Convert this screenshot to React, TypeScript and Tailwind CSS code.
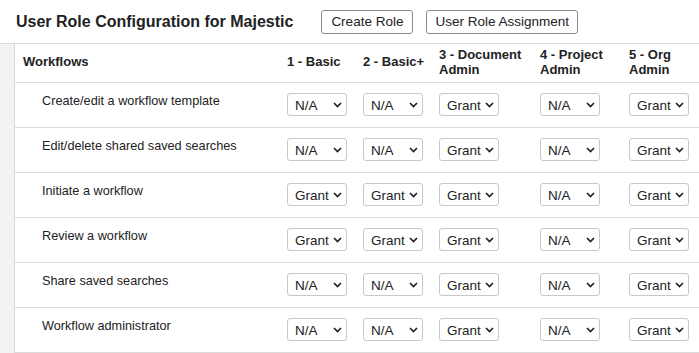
type Perm = 'N/A' | 'Grant'

const roles = ['1 - Basic', '2 - Basic+', '3 - Document Admin', '4 - Project Admin', '5 - Org Admin']

const rows: { label: string; perms: Perm[] }[] = [
  { label: 'Create/edit a workflow template', perms: ['N/A', 'N/A', 'Grant', 'N/A', 'Grant'] },
  { label: 'Edit/delete shared saved searches', perms: ['N/A', 'N/A', 'Grant', 'N/A', 'Grant'] },
  { label: 'Initiate a workflow', perms: ['Grant', 'Grant', 'Grant', 'N/A', 'Grant'] },
  { label: 'Review a workflow', perms: ['Grant', 'Grant', 'Grant', 'N/A', 'Grant'] },
  { label: 'Share saved searches', perms: ['N/A', 'N/A', 'Grant', 'N/A', 'Grant'] },
  { label: 'Workflow administrator', perms: ['N/A', 'N/A', 'Grant', 'N/A', 'Grant'] },
]

const cols = 'grid grid-cols-[272px_76px_76px_101px_89px_1fr]'

function PermSelect({ value }: { value: Perm }) {
  return (
    <div className="relative w-[60px] h-[23px]">
      <select
        defaultValue={value}
        className="appearance-none w-full h-full rounded-[3px] border border-[#c8c8c8] bg-white pl-[7px] pr-4 pt-[2px] text-[13.5px] text-[#222] outline-none"
      >
        <option value="N/A">N/A</option>
        <option value="Grant">Grant</option>
      </select>
      {/* chevron */}
      <svg
        className="pointer-events-none absolute right-[5px] top-[9px]"
        width="9"
        height="6"
        viewBox="0 0 9 6"
        fill="none"
      >
        <polyline points="1,1 4.5,4.5 8,1" stroke="#222" strokeWidth="1.7" />
      </svg>
    </div>
  )
}

export default function App() {
  return (
    <div className="w-[699px] h-[353px] overflow-hidden bg-white font-['Liberation_Sans',Arial,sans-serif] text-[#222]">
      {/* Title bar */}
      <div className="flex items-center h-[43px] pl-4 pt-[1px]">
        <h1 className="text-[16px] font-bold">User Role Configuration for Majestic</h1>
        <button className="ml-[28px] h-[24px] px-[9px] rounded-[3px] border border-[#8a8a8a] bg-white text-[13.5px]">
          Create Role
        </button>
        <button className="ml-[13px] h-[24px] px-[8px] rounded-[3px] border border-[#8a8a8a] bg-white text-[13.5px]">
          User Role Assignment
        </button>
      </div>

      <div className="flex border-t border-[#d9d9d9]">
        <div className="w-[15px] bg-[#f3f3f3] border-r border-[#d9d9d9] shrink-0" />
        <div className="flex-1">
          {/* Header */}
          <div className={`${cols} h-[39px] pb-[3px] border-b border-[#dcdcdc] text-[13px] font-bold items-center leading-[15px]`}>
            <div className="pl-2">Workflows</div>
            {roles.map((r) => (
              <div key={r} className="pr-2">
                {r}
              </div>
            ))}
          </div>

          {rows.map((row) => (
            <div key={row.label} className={`${cols} h-[45px] border-b border-[#dcdcdc] pt-[10px]`}>
              <div className="pl-[27px] text-[12.7px] leading-[14px] pt-[1px]">{row.label}</div>
              {row.perms.map((p, i) => (
                <div key={i}>
                  <PermSelect value={p} />
                </div>
              ))}
            </div>
          ))}
        </div>
      </div>
    </div>
  )
}
